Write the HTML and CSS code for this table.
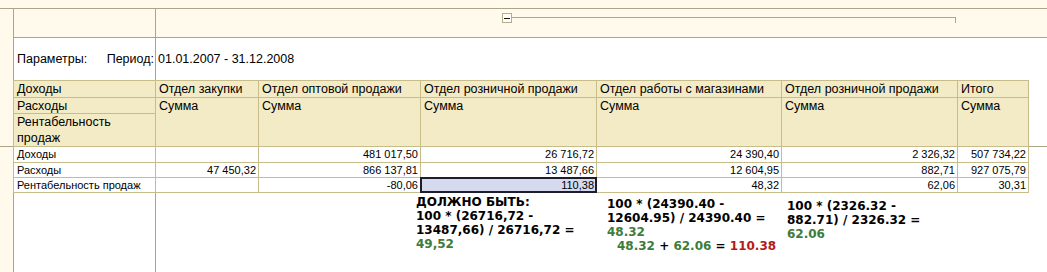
FILE: index.html
```html
<!DOCTYPE html>
<html lang="ru">
<head>
<meta charset="utf-8">
<title>Отчет</title>
<link rel="stylesheet" href="styles.css">
</head>
<body>
<div class="topbar"></div>
<div class="sheet">
  <div class="rowhdr"><div class="mark"></div></div>
  <div class="main">
    <div class="grp">
      <div class="c1"></div>
      <div class="grpctl">
        <div class="box"></div>
        <div class="bracket"></div>
      </div>
    </div>
    <div class="params">
      <div class="c1 plabels"><span>Параметры:</span><span>Период:</span></div>
      <div class="pval">01.01.2007 - 31.12.2008</div>
    </div>
    <div class="tblrow">
      <div class="grid">
        <div class="h nw">Доходы</div>
        <div class="h nw">Отдел закупки</div>
        <div class="h nw">Отдел оптовой продажи</div>
        <div class="h nw">Отдел розничной продажи</div>
        <div class="h nw">Отдел работы с магазинами</div>
        <div class="h nw">Отдел розничной продажи</div>
        <div class="h nw">Итого</div>

        <div class="h nw">Расходы</div>
        <div class="h nw span2">Сумма</div>
        <div class="h nw span2">Сумма</div>
        <div class="h nw span2">Сумма</div>
        <div class="h nw span2">Сумма</div>
        <div class="h nw span2">Сумма</div>
        <div class="h nw span2">Сумма</div>

        <div class="h">Рентабельность продаж</div>

        <div class="d r1">Доходы</div>
        <div class="d r1 num"></div>
        <div class="d r1 num">481 017,50</div>
        <div class="d r1 num">26 716,72</div>
        <div class="d r1 num">24 390,40</div>
        <div class="d r1 num">2 326,32</div>
        <div class="d r1 num">507 734,22</div>

        <div class="d">Расходы</div>
        <div class="d num">47 450,32</div>
        <div class="d num">866 137,81</div>
        <div class="d num">13 487,66</div>
        <div class="d num">12 604,95</div>
        <div class="d num">882,71</div>
        <div class="d num">927 075,79</div>

        <div class="d">Рентабельность продаж</div>
        <div class="d num"></div>
        <div class="d num">-80,06</div>
        <div class="d num sel">110,38</div>
        <div class="d num">48,32</div>
        <div class="d num">62,06</div>
        <div class="d num">30,31</div>
      </div>
      <div class="filler"></div>
    </div>
    <div class="notes">
      <div class="c1"></div>
      <div class="note n1">
        <div>ДОЛЖНО БЫТЬ:</div>
        <div>100 * (26716,72 -</div>
        <div>13487,66) / 26716,72 =</div>
        <div class="g">49,52</div>
      </div>
      <div class="note n2">
        <div>100 * (24390.40 -</div>
        <div>12604.95) / 24390.40 =</div>
        <div class="g">48.32</div>
        <div class="indent"><span class="g">48.32</span> + <span class="g">62.06</span> = <span class="r">110.38</span></div>
      </div>
      <div class="note n3">
        <div>100 * (2326.32 -</div>
        <div>882.71) / 2326.32 =</div>
        <div class="g">62.06</div>
      </div>
    </div>
  </div>
</div>
</body>
</html>
```
FILE: styles.css
```css
* { box-sizing: border-box; }

body {
  margin: 0;
  width: 1047px;
  height: 272px;
  overflow: hidden;
  background: #fffaeb;
  font-family: "Liberation Sans", Arial, sans-serif;
  color: #000;
}

.topbar {
  height: 9px;
  border-bottom: 1px solid #aca689;
}

.sheet {
  display: flex;
  height: 263px;
}

.rowhdr {
  width: 14px;
  flex: none;
  border-right: 1px solid #aca689;
}

.rowhdr .mark {
  height: 138px;
  border-bottom: 1px solid #aca689;
}

.main {
  flex: 1;
  display: flex;
  flex-direction: column;
  min-width: 0;
}

.c1 {
  width: 142px;
  flex: none;
  border-right: 1px solid #aca689;
}

/* grouping row */
.grp {
  display: flex;
  height: 29px;
  border-bottom: 1px solid #aca689;
}

.grpctl {
  display: flex;
  align-items: flex-start;
  padding: 4px 0 0 346px;
}

.box {
  width: 10px;
  height: 10px;
  border: 1px solid #b3ad8c;
  background: #fffdf6;
  display: flex;
  align-items: center;
  justify-content: center;
}

.box::before {
  content: "";
  width: 6px;
  height: 1px;
  background: #111;
}

.bracket {
  width: 444px;
  height: 6px;
  margin-top: 4px;
  border-top: 1px solid #aca689;
  border-right: 1px solid #aca689;
}

/* parameters row */
.params {
  display: flex;
  height: 42px;
  background: #fff;
  font-size: 12.5px;
  line-height: 15px;
}

.plabels {
  display: flex;
  justify-content: space-between;
  padding: 14px 1px 0 3px;
}

.pval {
  padding: 14px 0 0 2px;
}

/* table */
.tblrow {
  display: flex;
  margin-left: -1px;
  background: #fff;
}

.grid {
  display: grid;
  width: 1016px;
  flex: none;
  grid-template-columns: 141px 102px 161px 175px 184px 175px 70px;
  grid-template-rows: 16px 15px 32px 15px 14px 14px;
  gap: 1px;
  background: #c8bc8a;
  border: 1px solid #c8bc8a;
}

.h {
  background: #f3ebc6;
  font-size: 12.5px;
  line-height: 16px;
  padding: 0 3px;
}

.nw { white-space: nowrap; }

.span2 { grid-row: span 2; }

.d {
  background: #fff;
  font-size: 11px;
  line-height: 14px;
  padding: 0 2px 0 3px;
  white-space: nowrap;
}

.d.r1 { padding-top: 1px; line-height: 13px; }

.num { text-align: right; }

.sel {
  background: #d5daee;
  outline: 2px solid #1c1e2e;
  outline-offset: -1px;
}

.filler {
  flex: 1;
  height: 67px;
  border-bottom: 1px solid #aca689;
}

/* annotations */
.notes {
  flex: 1;
  display: flex;
  align-items: flex-start;
  background: #fff;
}

.notes .c1 { align-self: stretch; }

.note {
  font-family: "DejaVu Sans", Verdana, sans-serif;
  font-weight: bold;
  font-size: 12px;
  line-height: 14px;
  white-space: nowrap;
}

.n1 { width: 191px; margin: 2px 0 0 260px; }
.n2 { width: 180px; margin-top: 4px; }
.n3 { margin-top: 6px; }

.indent { padding-left: 10px; }

.g { color: #3c7c3c; }
.r { color: #b41a1a; }
```
